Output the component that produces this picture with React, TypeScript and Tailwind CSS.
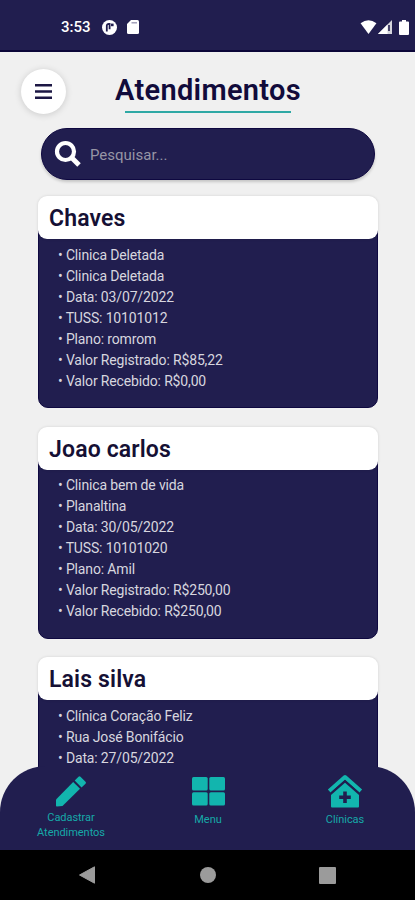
import React from "react";

type Visit = { name: string; lines: string[] };

const visits: Visit[] = [
  {
    name: "Chaves",
    lines: [
      "Clinica Deletada",
      "Clinica Deletada",
      "Data: 03/07/2022",
      "TUSS: 10101012",
      "Plano: romrom",
      "Valor Registrado: R$85,22",
      "Valor Recebido: R$0,00",
    ],
  },
  {
    name: "Joao carlos",
    lines: [
      "Clinica bem de vida",
      "Planaltina",
      "Data: 30/05/2022",
      "TUSS: 10101020",
      "Plano: Amil",
      "Valor Registrado: R$250,00",
      "Valor Recebido: R$250,00",
    ],
  },
  {
    name: "Lais silva",
    lines: ["Clínica Coração Feliz", "Rua José Bonifácio", "Data: 27/05/2022"],
  },
];

function StatusBar() {
  return (
    <div className="flex h-[52px] shrink-0 items-center border-b-2 border-[#0b0638] bg-[#211e4f] pt-[4px] pl-[61px] pr-[6px] text-white">
      <span className="w-[41px] text-[15px] font-medium leading-none">3:53</span>
      <svg className="size-[15px]" viewBox="0 0 15 15">
        <circle cx="7.5" cy="7.5" r="7.5" fill="white" />
        <path d="M4.8 11.5V5.8Q4.8 3.9 6.8 3.9H7.6V9.2" fill="none" stroke="#211e4f" strokeWidth="1.8" />
        <rect x="9" y="3.6" width="2.6" height="2.6" fill="#211e4f" />
      </svg>
      <svg className="ml-[10px] h-[14px] w-[12px]" viewBox="0 0 12 14">
        <path d="M4 0H10.5Q12 0 12 1.5V12.5Q12 14 10.5 14H1.5Q0 14 0 12.5V4Z" fill="white" />
        <path d="M4.5 2.8H10" stroke="#9b99b4" strokeWidth="1.4" />
      </svg>
      <div className="ml-auto flex items-center">
        <svg className="h-[14px] w-[17px]" viewBox="0 0 17 15">
          <path d="M0 3.4Q8.5 -3 17 3.4L8.5 15Z" fill="white" />
        </svg>
        <svg className="ml-[1px] h-[14px] w-[14px]" viewBox="0 0 14 14">
          <path d="M14 0V14H0Z" fill="#d5d5dc" />
          <path d="M9.5 4.5V14H0Z" fill="white" />
          <path d="M11 5V11" stroke="#211e4f" strokeWidth="1.6" />
        </svg>
        <svg className="ml-[7px] h-[15px] w-[10px]" viewBox="0 0 10 15">
          <path d="M3 0H7V1.5H9Q10 1.5 10 2.5V14Q10 15 9 15H1Q0 15 0 14V2.5Q0 1.5 1 1.5H3Z" fill="white" />
        </svg>
      </div>
    </div>
  );
}

function Header() {
  return (
    <header className="flex h-[75.5px] shrink-0 items-start pl-[21px] pt-[17px]">
      <button className="flex size-[45px] items-center justify-center rounded-full bg-white shadow-[0_1px_7px_rgba(0,0,0,0.16)]">
        <svg className="h-[15px] w-[17px]" viewBox="0 0 17 15">
          <path d="M0 1.3H17M0 7.5H17M0 13.7H17" stroke="#1c1744" strokeWidth="2.4" />
        </svg>
      </button>
      <div className="ml-[49px] flex w-[186px] flex-col items-center">
        <h1 className="whitespace-nowrap pt-[4px] text-[29px] font-semibold leading-[34px] tracking-[0.3px] text-[#110b3b]">Atendimentos</h1>
        <div className="mt-[3.5px] h-[2.5px] w-[166px] bg-[#2fa9a5]" />
      </div>
    </header>
  );
}

function SearchBar() {
  return (
    <div className="ml-[41px] flex h-[52.5px] w-[334px] shrink-0 items-center rounded-full border border-[#0e0840] bg-[#211e4f] pl-[12px] shadow-[0_2px_3px_rgba(0,0,0,0.18)]">
      <svg className="size-[28px]" viewBox="0 0 28 28">
        <circle cx="11.5" cy="11.5" r="8.5" fill="none" stroke="white" strokeWidth="4.2" />
        <path d="M18 18L25 25" stroke="white" strokeWidth="5" />
      </svg>
      <span className="ml-[8px] pt-[3px] text-[15px] text-[#9795a5]">Pesquisar...</span>
    </div>
  );
}

function VisitCard({ visit }: { visit: Visit }) {
  return (
    <article className="flex h-[212px] shrink-0 flex-col">
      <h2 className="relative z-10 flex h-[43px] shrink-0 items-center rounded-[9px] bg-white pl-[11px] pt-[4px] text-[23px] font-semibold tracking-[0.15px] text-[#151034] shadow-[0_0_3px_rgba(0,0,0,0.13)]">
        {visit.name}
      </h2>
      <ul className="-mt-[9px] flex-1 rounded-b-[10px] border border-[#0e0840] bg-[#211e4f] pl-[19px] pt-[13.5px] text-[14px] leading-[21px] tracking-[-0.15px] text-[#d7d6df]">
        {visit.lines.map((line, i) => (
          <li key={i} className="whitespace-nowrap">• {line}</li>
        ))}
      </ul>
    </article>
  );
}

function BottomNav() {
  return (
    <nav className="absolute inset-x-0 bottom-0 z-20 flex h-[84px] justify-between rounded-t-[46px] bg-[#211e4f] pl-[31px] pr-[30px] text-center text-[11px] leading-[14.5px] tracking-[-0.05px] text-[#16a9a8]">
      <div className="flex w-[80px] flex-col items-center pt-[9px]">
        <svg className="h-[32px] w-[32px]" viewBox="0 0 32 32" fill="#12b5ae">
          <path d="M1 24.5L18.2 7L25 13.8L7.5 31L1.8 31.5Q1 31.5 1 30.5Z" />
          <path d="M19.7 5.5L23.5 1.7Q24.5.7 25.5 1.7L30.5 6.7Q31.5 7.7 30.5 8.7L26.5 12.4Z" />
        </svg>
        <span className="mt-[4px]">Cadastrar<br />Atendimentos</span>
      </div>
      <div className="flex w-[80px] flex-col items-center pt-[11px]">
        <svg className="h-[29px] w-[33px]" viewBox="0 0 33 29" fill="#12b5ae">
          <rect width="15.7" height="13.4" rx="1.5" />
          <rect x="17.3" width="15.7" height="13.4" rx="1.5" />
          <rect y="15.2" width="15.7" height="13.4" rx="1.5" />
          <rect x="17.3" y="15.2" width="15.7" height="13.4" rx="1.5" />
        </svg>
        <span className="mt-[7px]">Menu</span>
      </div>
      <div className="flex w-[80px] flex-col items-center pt-[8px]">
        <svg className="h-[34px] w-[36px]" viewBox="0 0 36 34">
          <path d="M2.2 17L18 3L33.8 17" fill="none" stroke="#12b5ae" strokeWidth="4" strokeLinejoin="round" />
          <path d="M18 8.7L32 21V32.5Q32 33.5 31 33.5H5Q4 33.5 4 32.5V21Z" fill="#12b5ae" />
          <path d="M4 18.8L18 6.7L32 18.8" fill="none" stroke="#211e4f" strokeWidth="1.1" />
          <path d="M18 17.5V29M12.2 23.2H23.8" stroke="#211e4f" strokeWidth="3.6" />
        </svg>
        <span className="mt-[5px]">Clínicas</span>
      </div>
    </nav>
  );
}

function SystemNav() {
  return (
    <div className="flex h-[50px] shrink-0 items-center justify-between bg-black pl-[78px] pr-[79px] text-[#9b9b9b]">
      <svg className="size-[18px]" viewBox="0 0 18 18" fill="currentColor">
        <path d="M1.5 9L16.5 .8V17.2Z" stroke="currentColor" strokeLinejoin="round" />
      </svg>
      <div className="size-[16px] rounded-full bg-[#9b9b9b]" />
      <div className="size-[17px] rounded-[1px] bg-[#9b9b9b]" />
    </div>
  );
}

export default function App() {
  return (
    <div className="flex h-[900px] w-[415px] flex-col overflow-hidden bg-[#f0f0f0] font-['Roboto',sans-serif]">
      <StatusBar />
      <main className="relative flex min-h-0 flex-1 flex-col overflow-hidden">
        <Header />
        <SearchBar />
        <section className="ml-[38px] mt-[16px] flex w-[340px] flex-col gap-[18.6px]">
          {visits.map((v) => (
            <VisitCard key={v.name} visit={v} />
          ))}
        </section>
        <BottomNav />
      </main>
      <SystemNav />
    </div>
  );
}
